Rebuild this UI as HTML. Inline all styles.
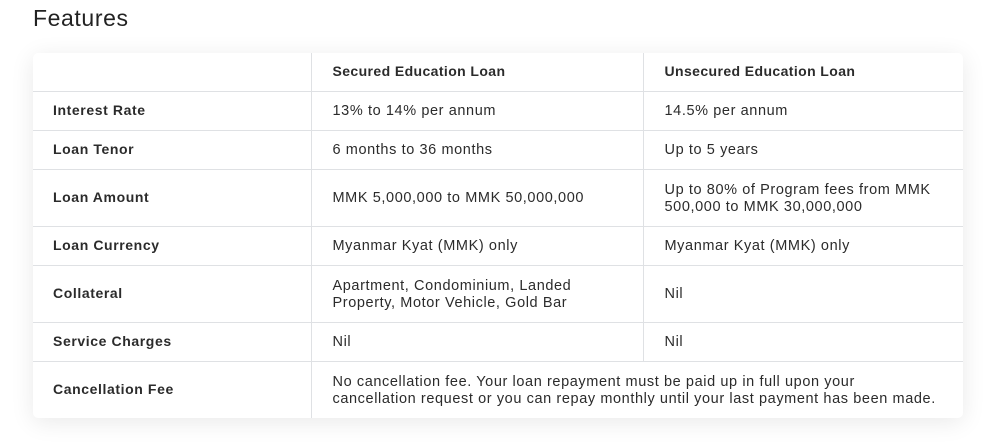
<!DOCTYPE html>
<html><head><style>
body{margin:0;width:984px;height:442px;background:#fff;font-family:"Liberation Sans",sans-serif;color:#2b2b2b;position:relative;overflow:hidden}
h1{position:absolute;left:33px;top:5px;margin:0;font-size:23px;font-weight:normal;color:#222;letter-spacing:0.6px}
.card{position:absolute;left:33px;top:53px;width:930px;height:365px;background:#fff;border-radius:5px;box-shadow:0 4px 24px rgba(0,0,0,0.09);overflow:hidden}
table{border-collapse:collapse;width:930px;table-layout:fixed;font-size:14.5px;letter-spacing:0.6px}
td{padding:2px 5px 0 21px;border-bottom:1px solid #dfe1e4;border-left:1px solid #dfe1e4;line-height:17px;vertical-align:middle;white-space:nowrap}
td:first-child{border-left:none;font-weight:bold;padding-left:20px;padding-top:0;font-size:14px}
tr:last-child td{border-bottom:none}
.h td{font-weight:bold;font-size:14px;letter-spacing:0.4px;padding-top:0}
</style></head><body>
<h1>Features</h1>
<div class="card"><table>
<colgroup><col style="width:278px"><col style="width:332px"><col style="width:320px"></colgroup>
<tr class="h" style="height:38px"><td></td><td>Secured Education Loan</td><td>Unsecured Education Loan</td></tr>
<tr style="height:39px"><td>Interest Rate</td><td>13% to 14% per annum</td><td>14.5% per annum</td></tr>
<tr style="height:39px"><td>Loan Tenor</td><td>6 months to 36 months</td><td>Up to 5 years</td></tr>
<tr style="height:57px"><td>Loan Amount</td><td>MMK 5,000,000 to MMK 50,000,000</td><td>Up to 80% of Program fees from MMK<br>500,000 to MMK 30,000,000</td></tr>
<tr style="height:39px"><td>Loan Currency</td><td>Myanmar Kyat (MMK) only</td><td>Myanmar Kyat (MMK) only</td></tr>
<tr style="height:57px"><td>Collateral</td><td>Apartment, Condominium, Landed<br>Property, Motor Vehicle, Gold Bar</td><td>Nil</td></tr>
<tr style="height:39px"><td>Service Charges</td><td>Nil</td><td>Nil</td></tr>
<tr style="height:57px"><td>Cancellation Fee</td><td colspan="2">No cancellation fee. Your loan repayment must be paid up in full upon your<br>cancellation request or you can repay monthly until your last payment has been made.</td></tr>
</table></div>
</body></html>
